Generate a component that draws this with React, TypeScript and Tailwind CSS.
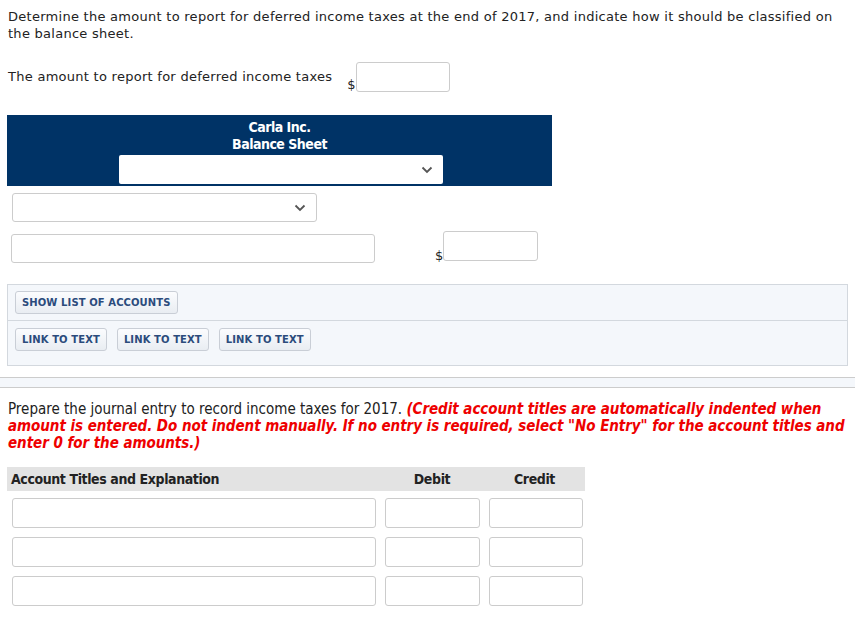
import React from "react";

const Chevron = () => (
  <svg width="12" height="8" viewBox="0 0 12 8" className="absolute right-[10px] top-1/2 -translate-y-1/2">
    <path d="M1.5 1.5 L6 6 L10.5 1.5" fill="none" stroke="#555" strokeWidth="1.8" />
  </svg>
);

const Btn = ({ children }: { children: React.ReactNode }) => (
  <button className="h-[23px] px-[6px] rounded-[3px] border border-[#c9ced6] bg-gradient-to-b from-[#fbfcfe] to-[#e9edf2] text-[#2b4b7c] text-[10px] font-bold tracking-[0.1px] leading-none">
    {children}
  </button>
);

export default function App() {
  return (
    <div className="w-[855px] h-[618px] bg-white text-[#222] text-[13px] overflow-hidden" style={{ fontFamily: '"DejaVu Sans", Verdana, sans-serif' }}>
      <p className="pl-[8px] pt-[8px] leading-[17px] tracking-[0.27px] pr-[10px]">
        Determine the amount to report for deferred income taxes at the end of 2017, and indicate how it should be classified on the balance sheet.
      </p>
      <div className="flex items-end mt-[20px] pl-[8px]">
        <span className="tracking-[0.27px] mb-[6px]">The amount to report for deferred income taxes</span>
        <span className="ml-[15px] mb-[-2px] text-[13px]">$</span>
        <div className="w-[94px] h-[30px] border border-[#ccc] rounded-[3px]" />
      </div>

      <div className="ml-[7px] mt-[23px] w-[545px] h-[71px] bg-[#003366] flex flex-col items-center pt-[4px]" style={{ fontFamily: '"DejaVu Sans Condensed", Tahoma, sans-serif' }}>
        <div className="text-white font-bold text-[14px] leading-[17px] tracking-[-0.5px]">Carla Inc.</div>
        <div className="text-white font-bold text-[14px] leading-[16px] tracking-[-0.5px]">Balance Sheet</div>
        <div className="relative mt-[3px] ml-[2px] w-[324px] h-[29px] bg-white rounded-[2px]">
          <Chevron />
        </div>
      </div>

      <div className="relative ml-[12px] mt-[7px] w-[305px] h-[29px] border border-[#ccc] rounded-[3px] bg-white">
        <Chevron />
      </div>

      <div className="flex items-end mt-[9px] ml-[11px]">
        <div className="w-[364px] h-[29px] border border-[#ccc] rounded-[3px]" />
        <span className="ml-[60px] mb-[-2px]">$</span>
        <div className="w-[95px] h-[30px] mb-[2px] border border-[#ccc] rounded-[3px]" />
      </div>

      <div className="ml-[7px] mt-[21px] w-[841px] border border-[#d3d8de] bg-[#f4f7fb]">
        <div className="px-[7px] pt-[6px] pb-[6px] border-b border-[#d3d8de]">
          <Btn>SHOW LIST OF ACCOUNTS</Btn>
        </div>
        <div className="px-[7px] pt-[7px] pb-[14px] flex gap-[10px]">
          <Btn>LINK TO TEXT</Btn>
          <Btn>LINK TO TEXT</Btn>
          <Btn>LINK TO TEXT</Btn>
        </div>
      </div>

      <div className="mt-[11px] h-[11px] border-y border-[#ccc] bg-[#f4f7fb]" />

      <p className="pl-[8px] pt-[13px] pr-0 leading-[17px] text-[15px]" style={{ fontFamily: '"DejaVu Sans Condensed", Tahoma, sans-serif' }}>
        <span className="text-[#222]">Prepare the journal entry to record income taxes for 2017. </span>
        <span className="text-[#ee0000] font-bold italic tracking-[-0.05px]">(Credit account titles are automatically indented when amount is entered. Do not indent manually. If no entry is required, select "No Entry" for the account titles and enter 0 for the amounts.)</span>
      </p>

      <div className="ml-[7px] mt-[15px] w-[578px]" style={{ fontFamily: '"DejaVu Sans Condensed", Tahoma, sans-serif' }}>
        <div className="h-[24px] bg-[#e3e3e3] flex items-center font-bold text-[14px] tracking-[-0.4px]">
          <div className="w-[373px] pl-[4px]">Account Titles and Explanation</div>
          <div className="w-[104px] text-center">Debit</div>
          <div className="w-[101px] text-center">Credit</div>
        </div>
        <div className="flex flex-col gap-[9px] mt-[7px] pl-[5px]">
          {[0, 1, 2].map((i) => (
            <div key={i} className="flex gap-[9px]">
              <div className="w-[364px] h-[30px] border border-[#ccc] rounded-[3px]" />
              <div className="w-[95px] h-[30px] border border-[#ccc] rounded-[3px]" />
              <div className="w-[94px] h-[30px] border border-[#ccc] rounded-[3px]" />
            </div>
          ))}
        </div>
      </div>
    </div>
  );
}
